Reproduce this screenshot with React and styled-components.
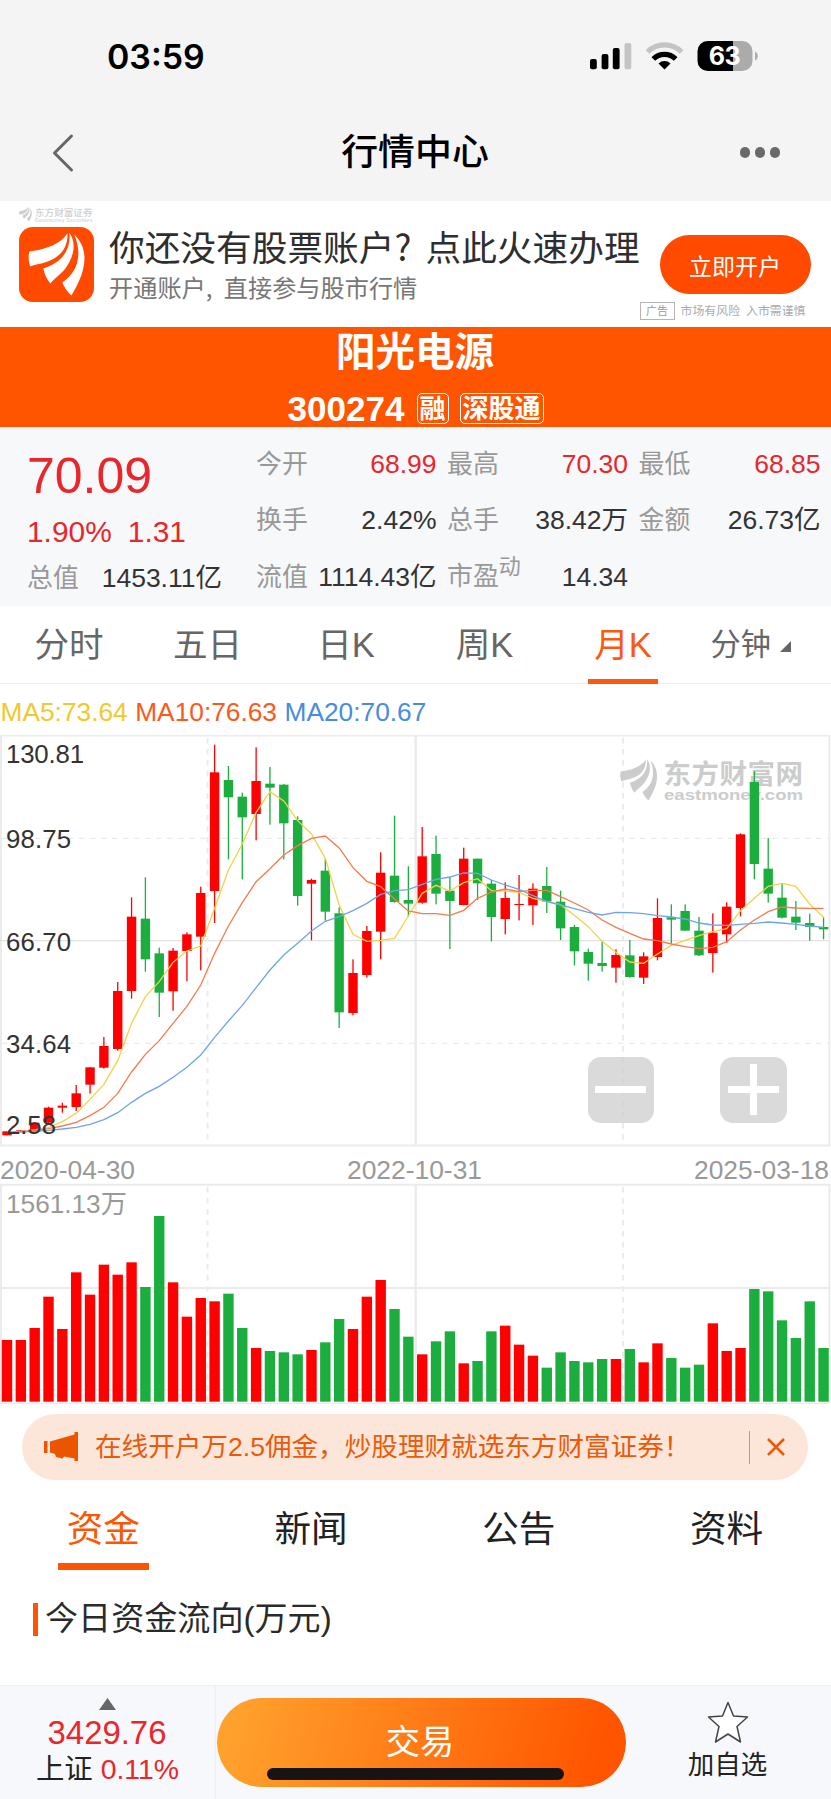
import styled, { createGlobalStyle } from 'styled-components'

const GlobalStyle = createGlobalStyle`
    * {
        box-sizing: border-box;
    }
    body {
        margin: 0;
        background-color: #FFF;
        color: #333;
        font-family: "Liberation Sans", "Noto Sans CJK SC", sans-serif;
    }
`

const Page = styled.div`
    width: 831px;
    height: 1799px;
    display: flex;
    flex-direction: column;
    overflow: hidden;
`

/* ---------- header ---------- */

const Header = styled.header`
    height: 201px;
    flex: none;
    background-color: #F4F4F4;
`
const StatusBar = styled.div`
    height: 104px;
    padding: 9px 73px 0 107px;
    display: flex;
    align-items: center;
    justify-content: space-between;
    svg {
        margin-top: 3px;
    }
`
const Clock = styled.span`
    color: #000;
    font-family: Inter, sans-serif;
    font-size: 33.9px;
    font-weight: 600;
    line-height: 40px;
`
const NavBar = styled.div`
    height: 97px;
    padding: 0 51px 0 50px;
    display: grid;
    grid-template-columns: 100px 1fr 100px;
    align-items: center;
`
const NavTitle = styled.h1`
    margin: 0;
    color: #000;
    font-size: 36.9px;
    font-weight: 500;
    line-height: 48px;
    text-align: center;
`
const MoreDots = styled.div`
    display: flex;
    justify-content: flex-end;
    gap: 4.6px;
`
const Dot = styled.i`
    width: 10.4px;
    height: 10.4px;
    border-radius: 50%;
    background-color: #6A6A6A;
`

/* ---------- advert ---------- */

const Advert = styled.section`
    height: 126px;
    flex: none;
    display: flex;
    padding: 5px 19px 0;
`
const AdLogo = styled.div`
    width: 75px;
    margin-right: 15px;
`
const BrandLine = styled.div`
    height: 21px;
    display: flex;
    gap: 2px;
`
const AdText = styled.div`
    flex: 1;
    padding-top: 15px;
`
const AdHeadline = styled.div`
    height: 50px;
    display: flex;
    color: #2E2E2E;
    font-family: "Noto Sans CJK SC", sans-serif;
    font-size: 35.7px;
    line-height: 49px;
    white-space: nowrap;
`
const AdSub = styled.div`
    height: 30px;
    display: flex;
    color: #777;
    font-family: "Noto Sans CJK SC", sans-serif;
    font-size: 24.2px;
    line-height: 31px;
    white-space: nowrap;
`
const Mark = styled.span`
    width: ${props => props.$width}px;
`
const AdAction = styled.div`
    width: 172px;
    flex: none;
    display: flex;
    flex-direction: column;
    align-items: flex-end;
    padding: 29px 1.5px 0 0;
`
const AdButton = styled.button`
    width: 151px;
    height: 59px;
    border: none;
    border-radius: 30px;
    background-color: #FF4A00;
    color: #FFF;
    font-family: "Noto Sans CJK SC", sans-serif;
    font-size: 23px;
    line-height: 58px;
    padding: 0;
`
const AdNote = styled.div`
    height: 18px;
    margin: 8px 5px 0 0;
    display: flex;
    align-items: center;
    gap: 6px;
    color: #AAA;
    font-size: 11.9px;
    line-height: 16px;
    white-space: nowrap;
`
const AdTag = styled.span`
    width: 35px;
    height: 18px;
    border: 1px solid #B5B5B5;
    color: #999;
    font-size: 11px;
    line-height: 17px;
    text-align: center;
`

/* ---------- stock name ---------- */

const StockBar = styled.section`
    height: 100px;
    flex: none;
    background-color: #FF5500;
    color: #FFF;
    text-align: center;
`
const StockName = styled.h2`
    height: 50px;
    margin: 0;
    padding-right: 1px;
    font-size: 39.5px;
    font-weight: 700;
    line-height: 50px;
`
const StockCode = styled.div`
    height: 50px;
    padding-top: 13px;
    display: flex;
    justify-content: center;
    align-items: center;
    font-size: 35.1px;
    font-weight: 700;
    line-height: 36px;
`
const Badge = styled.span`
    height: 31px;
    margin-left: ${props => props.$gap}px;
    padding: 0 2px;
    border: 1px solid #FFF;
    border-radius: 5px;
    font-size: 26px;
    font-weight: 700;
    line-height: 30px;
`

/* ---------- quote ---------- */

const Quote = styled.section`
    height: 179px;
    flex: none;
    display: grid;
    grid-template-columns: 256px 191px 191.5px 192.5px;
    background-color: #F7F8FA;
`
const QuoteColumn = styled.div`
    display: flex;
    flex-direction: column;
    padding: ${props => props.$lead ? '22px 34px 0 27px' : '9px 10.5px 0 0'};
`
const Price = styled.div`
    height: 54px;
    color: #E8262B;
    font-size: 50px;
    line-height: 54px;
`
const Change = styled.div`
    height: 51px;
    display: flex;
    gap: 16px;
    color: #E8262B;
    font-size: 29.9px;
    line-height: 57px;
`
const QuoteItem = styled.div`
    height: ${props => props.$short ? 47 : 56.3}px;
    display: flex;
    justify-content: space-between;
    align-items: center;
    color: #999;
    font-size: 25.9px;
    line-height: 56px;
    white-space: nowrap;
`
const QuoteValue = styled.span`
    color: ${props => props.$up ? '#E8262B' : '#333'};
    font-size: 26.5px;
`
const Sup = styled.span`
    font-size: 22px;
    position: relative;
    top: -11px;
`

/* ---------- k-line tabs ---------- */

const PeriodTabs = styled.nav`
    height: 78px;
    flex: none;
    display: grid;
    grid-template-columns: repeat(6, 1fr);
    border-bottom: 1px solid #EEE;
`
const PeriodTab = styled.div`
    height: 78px;
    display: flex;
    justify-content: center;
    align-items: center;
    color: ${props => props.$active ? '#FA5A0F' : '#666'};
    font-size: ${props => props.$small ? 30.2 : 34.6}px;
    line-height: 70px;
    padding-right: ${props => props.$small ? 21 : 0.5}px;
`
const PeriodLabel = styled.span`
    height: 78px;
    padding: 0 6px;
    border-bottom: 5px solid ${props => props.$active ? '#FA5A0F' : 'transparent'};
    line-height: 78px;
`
const Averages = styled.div`
    height: 51px;
    flex: none;
    display: flex;
    gap: 7.5px;
    padding-left: 0.5px;
    font-size: 26.3px;
    line-height: 57px;
`
const Average = styled.span`
    color: ${props => props.$color};
`

/* ---------- charts ---------- */

const PricePanel = styled.div`
    height: 412px;
    flex: none;
    position: relative;
`
const Chart = styled.svg`
    display: block;
    flex: none;
`
const ZoomControls = styled.div`
    position: absolute;
    right: 44.5px;
    bottom: 24px;
    display: flex;
    gap: 66px;
`
const ZoomButton = styled.button`
    width: 66.500px;
    height: 66.500px;
    padding: 0;
    border: none;
    border-radius: 13px;
    background-color: rgba(205, 205, 205, 0.75);
    display: flex;
    align-items: center;
    justify-content: center;
`
const DateRow = styled.div`
    height: 36px;
    flex: none;
    display: flex;
    justify-content: space-between;
    color: #999;
    font-size: 26.4px;
    line-height: 47px;
    padding-right: 2px;
`

/* ---------- notice and tabs ---------- */

const Notice = styled.div`
    width: 786px;
    height: 66px;
    flex: none;
    margin: 10px 0 0 22px;
    padding: 0 23px 0 22px;
    border-radius: 33px;
    background-color: #FCE6DA;
    color: #EB5A0A;
    display: flex;
    align-items: center;
`
const NoticeText = styled.span`
    flex: 1;
    margin-left: 16px;
    font-size: 26.6px;
    line-height: 67px;
    white-space: nowrap;
`
const NoticeDivider = styled.i`
    width: 1.5px;
    height: 33px;
    margin-right: 17px;
    background-color: #F08A55;
`
const InfoTabs = styled.nav`
    height: 91px;
    flex: none;
    display: grid;
    grid-template-columns: repeat(4, 1fr);
    justify-items: center;
`
const InfoTab = styled.div`
    width: 91px;
    height: 90px;
    padding-right: 1px;
    border-bottom: 7px solid ${props => props.$active ? '#FF5500' : 'transparent'};
    color: ${props => props.$active ? '#FF5500' : '#222'};
    font-size: 36.6px;
    line-height: 100px;
    text-align: center;
`
const SectionTitle = styled.h3`
    height: 114px;
    flex: none;
    margin: 0;
    padding: 0 0 17px 33px;
    display: flex;
    align-items: center;
    gap: 7.5px;
    color: #2A2A2A;
    font-size: 33.1px;
    font-weight: 400;
    line-height: 40px;
    &::before {
        content: "";
        width: 4.5px;
        height: 33px;
        background-color: #FF5500;
    }
`
const SectionText = styled.span`
    padding-bottom: 2px;
`

/* ---------- footer ---------- */

const Footer = styled.footer`
    flex: 1;
    display: grid;
    grid-template-columns: 216px 411px 1fr;
    border-top: 1px solid #EEE;
    background-color: #F7F8FB;
`
const IndexBox = styled.div`
    border-right: 1px solid #EEE;
    display: flex;
    flex-direction: column;
    align-items: center;
    padding-top: 12px;
    color: #222;
`
const IndexValue = styled.div`
    margin-top: 4px;
    padding-right: 1px;
    color: #E8262B;
    font-size: 32.9px;
    line-height: 38px;
`
const IndexName = styled.div`
    font-size: 28.4px;
    line-height: 35px;
    span {
        color: #E8262B;
    }
`
const TradeButton = styled.button`
    width: 409px;
    height: 89px;
    margin: 12px 0 0 1px;
    padding: 0 3px 0 0;
    border: none;
    border-radius: 45px;
    background: linear-gradient(105deg, #FFA12D 5%, #FF5500 92%);
    color: #FFF;
    font-family: inherit;
    font-size: 34.3px;
    line-height: 89px;
    position: relative;
`
const HomeIndicator = styled.i`
    position: absolute;
    left: 50px;
    bottom: 7px;
    width: 297px;
    height: 12px;
    border-radius: 6px;
    background-color: #171412;
`
const Favorite = styled.div`
    display: flex;
    flex-direction: column;
    align-items: center;
    padding: 15px 3px 0 0;
    color: #222;
    font-size: 26.5px;
    line-height: 43px;
`

/* ---------- data ---------- */

// direction, body top, body bottom, wick top, wick bottom (thirds of a pixel)
const candles = [
    ['r', 1204, 1216, 1204, 1216], ['r', 1201, 1204, 1201, 1204], ['r', 1178, 1203, 1178, 1203],
    ['r', 1133, 1178, 1130, 1180], ['r', 1127, 1133, 1118, 1148], ['r', 1090, 1131, 1065, 1143],
    ['r', 1012, 1064, 1012, 1091], ['r', 948, 1013, 921, 1016], ['r', 783, 957, 756, 962],
    ['r', 560, 783, 502, 806], ['g', 566, 688, 442, 725], ['g', 670, 788, 653, 861],
    ['r', 662, 784, 654, 842], ['r', 613, 663, 607, 754], ['r', 489, 620, 470, 721],
    ['r', 127, 483, 44, 579], ['g', 150, 202, 108, 388], ['g', 200, 262, 188, 448],
    ['r', 153, 252, 52, 331], ['g', 161, 173, 111, 284], ['g', 164, 280, 162, 388],
    ['g', 270, 498, 259, 527], ['r', 450, 461, 446, 631], ['g', 422, 545, 386, 572],
    ['g', 550, 847, 532, 894], ['r', 729, 849, 688, 856], ['r', 603, 735, 588, 743],
    ['r', 428, 605, 367, 688], ['g', 437, 516, 257, 518], ['g', 510, 521, 409, 560],
    ['r', 379, 518, 291, 521], ['g', 372, 491, 317, 523], ['g', 482, 513, 441, 657],
    ['r', 386, 525, 353, 526], ['g', 386, 460, 386, 510], ['g', 461, 561, 450, 634],
    ['r', 504, 567, 457, 613], ['r', 522, 525, 435, 571], ['r', 476, 526, 460, 585],
    ['g', 468, 515, 411, 549], ['g', 515, 595, 482, 630], ['g', 591, 664, 585, 706],
    ['g', 666, 701, 656, 752], ['g', 699, 708, 634, 725], ['r', 675, 713, 658, 758],
    ['g', 676, 741, 630, 743], ['r', 679, 743, 667, 762], ['r', 564, 681, 505, 691],
    ['g', 562, 569, 523, 641], ['g', 543, 602, 523, 602], ['g', 602, 676, 561, 678],
    ['r', 608, 669, 550, 728], ['r', 530, 613, 517, 638], ['r', 313, 534, 310, 559],
    ['g', 156, 402, 124, 448], ['g', 416, 491, 324, 518], ['g', 503, 563, 460, 565],
    ['g', 560, 578, 513, 600], ['g', 579, 591, 551, 632], ['g', 591, 598, 562, 628],
]

const lines = [
    { color: '#F0D24A', points: [1206, 1204, 1200, 1192, 1175, 1150, 1108, 1063, 992, 880, 800, 755, 697, 663, 648, 535, 420, 342, 247, 185, 213, 272, 312, 385, 525, 613, 634, 631, 625, 558, 490, 466, 483, 458, 446, 482, 483, 487, 505, 515, 524, 556, 590, 634, 667, 696, 700, 672, 646, 631, 617, 605, 596, 542, 505, 469, 460, 469, 522, 562] },
    { color: '#F47B4B', points: [1207, 1205, 1202, 1196, 1188, 1177, 1157, 1132, 1090, 1026, 973, 932, 880, 829, 765, 670, 588, 518, 455, 416, 375, 347, 325, 318, 354, 413, 454, 470, 507, 543, 551, 551, 556, 541, 505, 486, 477, 485, 481, 481, 500, 519, 540, 570, 592, 610, 627, 632, 642, 650, 656, 652, 635, 600, 570, 545, 531, 534, 535, 535] },
    { color: '#6FA3EE', points: [1208, 1206, 1204, 1201, 1197, 1192, 1183, 1169, 1148, 1117, 1090, 1069, 1042, 1012, 975, 922, 873, 826, 773, 720, 675, 640, 603, 574, 560, 542, 520, 493, 482, 479, 463, 448, 441, 429, 430, 450, 465, 478, 497, 515, 525, 536, 547, 555, 547, 548, 551, 557, 561, 567, 579, 585, 586, 583, 580, 576, 579, 583, 588, 592] },
]

// top edge of every volume bar (thirds of a pixel)
const volumes = [
    570, 570, 534, 440, 537, 367, 434, 344, 374, 337, 411, 198, 397, 500, 444,
    454, 431, 534, 594, 603, 607, 613, 600, 577, 507, 537, 440, 390, 477, 560,
    613, 574, 544, 640, 633, 544, 527, 584, 617, 653, 607, 633, 637, 627, 627,
    597, 637, 580, 624, 653, 644, 520, 603, 594, 417, 424, 511, 564, 454, 594,
]

const RED = '#FF0000'
const GREEN = '#1BAE3F'
const GRID = '#EBEBEB'
const STEP = 13.84

const centerX = i => 7 + i * STEP
const priceY = v => v / 3 - 5
const volumeY = v => v / 3 - 33

const priceLabels = [
    { text: '130.81', y: 28.3, width: 78 },
    { text: '98.75', y: 113.3, width: 65 },
    { text: '66.70', y: 216.3, width: 65 },
    { text: '34.64', y: 318.3, width: 65 },
    { text: '2.58', y: 398.7, width: 50 },
]

const quoteColumns = [
    [['今开', '68.99', true], ['换手', '2.42%'], ['流值', '1114.43亿']],
    [['最高', '70.30', true], ['总手', '38.42万'], ['市盈', '14.34', false, '动']],
    [['最低', '68.85', true], ['金额', '26.73亿']],
]

/* ---------- drawings ---------- */

// three feathers of the brand mark, drawn in a 57 x 63 box
function Feathers ({ x = 0, y = 0, scale = 1, color }) {
    return (
        <g transform={`translate(${x} ${y}) scale(${scale})`} fill={color}>
            <path d="M1 19 C18 17 33 11 39 1 C40 12 34 22 24 27 C17 31 9 31 2 34 C0 29 0 23 1 19Z" />
            <path d="M41 0 C48 10 46 22 39 33 C35 40 29 43 22 51 C18 46 16 41 15 36 C31 31 43 20 41 0Z" />
            <path d="M46 2 C58 14 58 28 53 43 C50 51 46 58 43 63 C39 59 36 55 34 50 C46 42 56 26 46 2Z" />
        </g>
    )
}

function StatusIcons () {
    return (
        <svg width="169" height="34" viewBox="0 0 169 34">
            <g fill="#000">
                <rect x="1" y="18" width="6.800" height="10.300" rx="2" />
                <rect x="12.600" y="13" width="6.800" height="15.300" rx="2" />
                <rect x="23.800" y="7" width="6.800" height="21.300" rx="2" />
                <rect x="35.500" y="2" width="6.800" height="26.300" rx="2" fill="#C4C4C4" />
            </g>
            <path d="M58.500 11 A24 24 0 0 1 92.500 11" fill="none" stroke="#C4C4C4" strokeWidth="5.200" />
            <path d="M64.300 18 A16 16 0 0 1 86.700 18" fill="none" stroke="#000" strokeWidth="5.200" />
            <path d="M75.500 28.500 L69.500 22.500 A8.500 8.500 0 0 1 81.500 22.500Z" fill="#000" />
            <clipPath id="battery"><rect x="108.500" y="0" width="55" height="30" rx="10" /></clipPath>
            <g clipPath="url(#battery)">
                <rect x="108" y="0" width="36" height="30" fill="#000" />
                <rect x="144" y="0" width="20" height="30" fill="#ABABAB" />
            </g>
            <path d="M166 10.500 A5 5 0 0 1 166 19.500Z" fill="#ABABAB" />
            <text x="135.700" y="24" textAnchor="middle" fill="#FFF" fontFamily="Inter" fontSize="25" fontWeight="700" textLength="32">63</text>
        </svg>
    )
}

function PriceChart () {
    return (
        <Chart width="831" height="412" viewBox="0 0 831 412">
            <g stroke={GRID} strokeWidth="2" fill="none">
                <rect x="1" y="0.500" width="828.500" height="410" />
                <path d="M415.700 0 V410" strokeWidth="2.500" />
                <path d="M0 205.700 H829" stroke="#E2E2E2" strokeWidth="1.300" />
                <path d="M207.500 3 V410 M623 3 V410" strokeDasharray="5.500 5.500" />
                <path d="M2 103.300 H829 M2 308.300 H829" strokeWidth="1.300" strokeDasharray="5.500 5.500" />
            </g>
            <Feathers x={620} y={24} scale={0.66} color="#CCCCCC" />
            <g fill="#CCCCCC" fontWeight="700">
                <text x="663.500" y="49" fontSize="27.500" fontFamily="Noto Sans CJK SC" textLength="139.500">东方财富网</text>
                <text x="664" y="65" fontSize="15.500" fontFamily="Liberation Sans" textLength="139" lengthAdjust="spacingAndGlyphs">eastmoney.com</text>
            </g>
            {candles.map(([dir, top, bottom, high, low], i) => (
                <g key={i} fill={dir === 'r' ? RED : GREEN}>
                    <rect x={centerX(i) - 0.65} y={priceY(high)} width="1.3" height={(low - high) / 3} />
                    <rect x={centerX(i) - 4.7} y={priceY(top)} width="9.4" height={(bottom - top) / 3} />
                </g>
            ))}
            {lines.map(line => (
                <polyline
                    key={line.color}
                    fill="none"
                    stroke={line.color}
                    strokeWidth="1.3"
                    points={line.points.map((v, i) => `${centerX(i)},${priceY(v)}`).join(' ')}
                />
            ))}
            <g fill="#333" fontSize="25.800">
                {priceLabels.map(label => (
                    <text key={label.text} x="6" y={label.y} textLength={label.width}>{label.text}</text>
                ))}
            </g>
        </Chart>
    )
}

function VolumeChart () {
    return (
        <Chart width="831" height="221" viewBox="0 0 831 221">
            <g stroke={GRID} strokeWidth="2" fill="none">
                <path d="M1 220 V1.700 H829.500 V220" />
                <path d="M415.700 2 V220" strokeWidth="2.500" />
                <path d="M0 105 H829" />
                <path d="M207.500 4 V220 M623 4 V220" strokeDasharray="5.500 5.500" />
                <path d="M2 207 H829 M0 220.300 H829" strokeWidth="1.200" />
            </g>
            {volumes.map((top, i) => (
                <rect
                    key={i}
                    x={centerX(i) - 5.2}
                    y={volumeY(top)}
                    width="10.4"
                    height={218.7 - volumeY(top)}
                    fill={candles[i][0] === 'r' ? RED : GREEN}
                />
            ))}
            <text x="6" y="30" fill="#999" fontSize="26.200">1561.13万</text>
        </Chart>
    )
}

function App () {
    return (
        <Page>
            <GlobalStyle />
            <Header>
                <StatusBar>
                    <Clock>03:59</Clock>
                    <StatusIcons />
                </StatusBar>
                <NavBar>
                    <svg width="26" height="42" viewBox="0 0 26 42">
                        <path d="M21.500 4 L4.500 21 L21.500 38" fill="none" stroke="#666" strokeWidth="3" strokeLinecap="round" strokeLinejoin="round" />
                    </svg>
                    <NavTitle>行情中心</NavTitle>
                    <MoreDots><Dot /><Dot /><Dot /></MoreDots>
                </NavBar>
            </Header>

            <Advert>
                <AdLogo>
                    <BrandLine>
                        <svg width="75" height="18" viewBox="0 0 75 18" overflow="visible">
                            <Feathers x={0} y={1} scale={0.23} color="#CFCFCF" />
                            <text x="16" y="10" fontSize="9.500" fontWeight="500" fontFamily="Noto Sans CJK SC" fill="#CFCFCF" textLength="57.500" lengthAdjust="spacingAndGlyphs">东方财富证券</text>
                            <text x="16" y="15.500" fontSize="5" fontWeight="700" fill="#DADADA" textLength="57.500" lengthAdjust="spacingAndGlyphs">Eastmoney Securities</text>
                        </svg>
                    </BrandLine>
                    <svg width="75" height="75" viewBox="0 0 75 75">
                        <rect width="75" height="75" rx="14" fill="#FF4A00" />
                        <Feathers x={9.3} y={5.5} color="#FFF" />
                    </svg>
                </AdLogo>
                <AdText>
                    <AdHeadline>你还没有股票账户<Mark $width={31}>?</Mark>点此火速办理</AdHeadline>
                    <AdSub>开通账户<Mark $width={18}>,</Mark>直接参与股市行情</AdSub>
                </AdText>
                <AdAction>
                    <AdButton>立即开户</AdButton>
                    <AdNote>
                        <AdTag>广告</AdTag>
                        <span>市场有风险</span>
                        <span>入市需谨慎</span>
                    </AdNote>
                </AdAction>
            </Advert>

            <StockBar>
                <StockName>阳光电源</StockName>
                <StockCode>
                    300274
                    <Badge $gap={12}>融</Badge>
                    <Badge $gap={11}>深股通</Badge>
                </StockCode>
            </StockBar>

            <Quote>
                <QuoteColumn $lead>
                    <Price>70.09</Price>
                    <Change><span>1.90%</span><span>1.31</span></Change>
                    <QuoteItem $short>总值<QuoteValue>1453.11亿</QuoteValue></QuoteItem>
                </QuoteColumn>
                {quoteColumns.map((column, i) => (
                    <QuoteColumn key={i}>
                        {column.map(([label, value, up, sup]) => (
                            <QuoteItem key={label}>
                                <span>{label}{sup && <Sup>{sup}</Sup>}</span>
                                <QuoteValue $up={up}>{value}</QuoteValue>
                            </QuoteItem>
                        ))}
                    </QuoteColumn>
                ))}
            </Quote>

            <PeriodTabs>
                {['分时', '五日', '日K', '周K', '月K'].map(name => (
                    <PeriodTab key={name} $active={name === '月K'}>
                        <PeriodLabel $active={name === '月K'}>{name}</PeriodLabel>
                    </PeriodTab>
                ))}
                <PeriodTab $small>
                    分钟
                    <svg width="21" height="14" viewBox="0 0 21 14">
                        <path d="M8 15 L20 3 V15Z" fill="#666" />
                    </svg>
                </PeriodTab>
            </PeriodTabs>

            <Averages>
                <Average $color="#EFC92D">MA5:73.64</Average>
                <Average $color="#FA5A1E">MA10:76.63</Average>
                <Average $color="#4A8BE0">MA20:70.67</Average>
            </Averages>

            <PricePanel>
                <PriceChart />
                <ZoomControls>
                    <ZoomButton>
                        <svg width="51" height="51"><rect y="22" width="51" height="7" fill="#FFF" /></svg>
                    </ZoomButton>
                    <ZoomButton>
                        <svg width="51" height="51"><path d="M0 22 H22 V0 H29 V22 H51 V29 H29 V51 H22 V29 H0Z" fill="#FFF" /></svg>
                    </ZoomButton>
                </ZoomControls>
            </PricePanel>
            <DateRow>
                <span>2020-04-30</span>
                <span>2022-10-31</span>
                <span>2025-03-18</span>
            </DateRow>
            <VolumeChart />

            <Notice>
                <svg width="35" height="30" viewBox="0 0 35 30">
                    <path d="M0 9 H3.500 V21 H0Z M6 9.500 L30.500 2.500 V0 H34 V29 H30.500 V26.500 L20 24.500 L18.500 26.500 L12 25 L11 22 L6 20.500Z" fill="#EB5500" />
                </svg>
                <NoticeText>在线开户万2.5佣金，炒股理财就选东方财富证券！</NoticeText>
                <NoticeDivider />
                <svg width="18" height="18" viewBox="0 0 18 18">
                    <path d="M1 1 L17 17 M17 1 L1 17" stroke="#EB5A0A" strokeWidth="2.600" />
                </svg>
            </Notice>

            <InfoTabs>
                <InfoTab $active>资金</InfoTab>
                <InfoTab>新闻</InfoTab>
                <InfoTab>公告</InfoTab>
                <InfoTab>资料</InfoTab>
            </InfoTabs>
            <SectionTitle><SectionText>今日资金流向(万元)</SectionText></SectionTitle>

            <Footer>
                <IndexBox>
                    <svg width="17" height="12"><path d="M8.500 0 L17 12 H0Z" fill="#666" /></svg>
                    <IndexValue>3429.76</IndexValue>
                    <IndexName>上证 <span>0.11%</span></IndexName>
                </IndexBox>
                <TradeButton>
                    交易
                    <HomeIndicator />
                </TradeButton>
                <Favorite>
                    <svg width="42" height="43" viewBox="0 0 42 43">
                        <path d="M21 1.500 L26.500 15 L40.500 16 L30 25.500 L33.500 41 L21 33 L8.500 41 L12 25.500 L1.500 16 L15.500 15Z" fill="#FFF" stroke="#444" strokeWidth="1.500" strokeLinejoin="round" />
                    </svg>
                    加自选
                </Favorite>
            </Footer>
        </Page>
    )
}

export default App
